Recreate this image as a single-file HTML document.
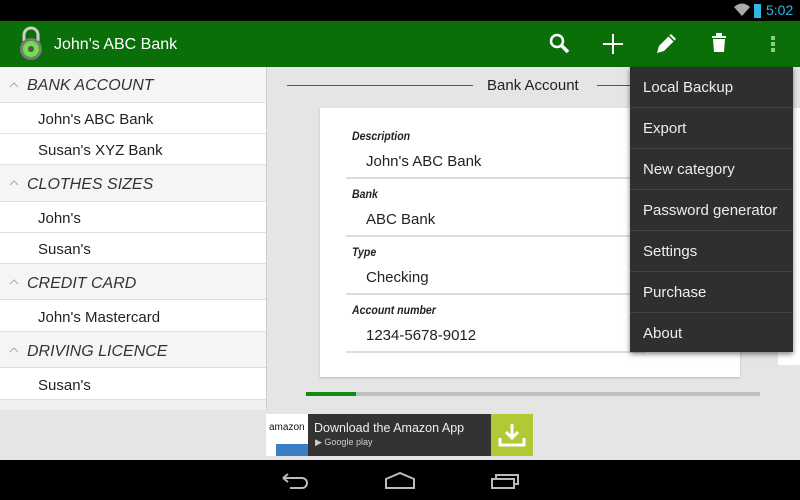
<!DOCTYPE html><html><head><style>
*{margin:0;padding:0;box-sizing:border-box}
body{width:800px;height:500px;overflow:hidden;background:#e5e5e5;font-family:"Liberation Sans",sans-serif;position:relative}
.a{position:absolute}
.hdr{position:absolute;left:0;width:266px;background:#f5f5f5;border-bottom:1px solid #ddd;font-style:italic;color:#333;font-size:16px;padding-left:27px}
.it{position:absolute;left:0;width:266px;background:#fff;border-bottom:1px solid #e0e0e0;color:#222;font-size:15px;padding-left:38px}
.car{position:absolute;left:9px;top:15px}
.lbl{position:absolute;left:352px;font-size:12px;font-weight:bold;font-style:italic;color:#222;transform:scaleX(.88);transform-origin:left}
.val{position:absolute;left:366px;font-size:15px;color:#222}
.dv{position:absolute;left:346px;width:300px;height:2px;background:#ddd}
.mi{position:absolute;left:630px;width:163px;height:41px;border-bottom:1px solid #444;color:#eee;font-size:15px;padding:12px 0 0 13px}
</style></head><body>
<div class="a" style="left:0;top:0;width:800px;height:21px;background:#000"></div>
<svg class="a" style="left:734px;top:3px" width="16" height="14"><path d="M0 4 Q8 -3 16 4 L8 13Z" fill="#aaa"/></svg>
<div class="a" style="left:754px;top:4px;width:7px;height:14px;background:#33b5e5"></div>
<div class="a" style="left:766px;top:2px;color:#33b5e5;font-size:14px">5:02</div>
<div class="a" style="left:0;top:21px;width:800px;height:46px;background:#0a6f08"></div>
<svg class="a" style="left:17px;top:26px" width="28" height="36"><path d="M7 15 V9 a7 7 0 0 1 14 0 V15" fill="none" stroke="#ccc" stroke-width="3"/><circle cx="14" cy="23" r="11" fill="#7a7a7a"/><circle cx="14" cy="23" r="8" fill="#6ee24a"/><circle cx="14" cy="23" r="3" fill="#555"/></svg>
<div class="a" style="left:54px;top:36px;color:#fff;font-size:16px">John's ABC Bank</div>
<svg class="a" style="left:549px;top:33px" width="22" height="22"><circle cx="8" cy="8" r="6" fill="none" stroke="#fff" stroke-width="2.5"/><path d="M12 12 L19 19" stroke="#fff" stroke-width="3.5"/></svg>
<svg class="a" style="left:602px;top:33px" width="22" height="22"><path d="M11 1V21M1 11H21" stroke="#fff" stroke-width="2"/></svg>
<svg class="a" style="left:655px;top:33px" width="22" height="22"><path d="M2 20 L4 13 L16 1 L21 6 L9 18Z" fill="#fff"/><path d="M14 3 L19 8" stroke="#0a6f08" stroke-width="1.5"/></svg>
<svg class="a" style="left:711px;top:33px" width="16" height="20"><rect x="1" y="3" width="14" height="2" fill="#fff"/><rect x="5" y="0" width="6" height="3" fill="#fff"/><path d="M2 6 H14 L13 19 H3Z" fill="#fff"/></svg>
<div class="a" style="left:771px;top:36px;width:4px;height:4px;background:#8c8;box-shadow:0 6px #8c8,0 12px #8c8"></div>
<div class="a" style="left:0;top:67px;width:267px;height:343px;background:#fff;border-right:1px solid #ccc"></div>
<div class="hdr" style="top:67px;height:36px;padding-top:10px"><svg class="car" width="10" height="6"><path d="M1 5L5 1L9 5" fill="none" stroke="#aaa"/></svg>BANK ACCOUNT</div>
<div class="it" style="top:103px;height:31px;padding-top:8px">John's ABC Bank</div>
<div class="it" style="top:134px;height:31px;padding-top:8px">Susan's XYZ Bank</div>
<div class="hdr" style="top:165px;height:37px;padding-top:11px"><svg class="car" width="10" height="6"><path d="M1 5L5 1L9 5" fill="none" stroke="#aaa"/></svg>CLOTHES SIZES</div>
<div class="it" style="top:202px;height:31px;padding-top:8px">John's</div>
<div class="it" style="top:233px;height:31px;padding-top:8px">Susan's</div>
<div class="hdr" style="top:264px;height:36px;padding-top:11px"><svg class="car" width="10" height="6"><path d="M1 5L5 1L9 5" fill="none" stroke="#aaa"/></svg>CREDIT CARD</div>
<div class="it" style="top:300px;height:32px;padding-top:9px">John's Mastercard</div>
<div class="hdr" style="top:332px;height:36px;padding-top:11px"><svg class="car" width="10" height="6"><path d="M1 5L5 1L9 5" fill="none" stroke="#aaa"/></svg>DRIVING LICENCE</div>
<div class="it" style="top:368px;height:32px;padding-top:9px">Susan's</div>
<div class="a" style="left:0;top:400px;width:266px;height:10px;background:#f0f0f0"></div>
<div class="a" style="left:287px;top:85px;width:186px;height:1px;background:#555"></div>
<div class="a" style="left:597px;top:85px;width:40px;height:1px;background:#555"></div>
<div class="a" style="left:487px;top:77px;font-size:15px;color:#222">Bank Account</div>
<div class="a" style="left:320px;top:108px;width:420px;height:269px;background:#fff;box-shadow:0 1px 2px #bbb"></div>
<div class="a" style="left:778px;top:108px;width:22px;height:257px;background:#fff"></div>
<div class="lbl" style="top:129px">Description</div><div class="val" style="top:153px">John's ABC Bank</div><div class="dv" style="top:177px"></div>
<div class="lbl" style="top:187px">Bank</div><div class="val" style="top:211px">ABC Bank</div><div class="dv" style="top:235px"></div>
<div class="lbl" style="top:245px">Type</div><div class="val" style="top:269px">Checking</div><div class="dv" style="top:293px"></div>
<div class="lbl" style="top:303px">Account number</div><div class="val" style="top:327px">1234-5678-9012</div><div class="dv" style="top:351px"></div>
<div class="a" style="left:306px;top:392px;width:454px;height:4px;background:#c0c0c0"></div>
<div class="a" style="left:306px;top:392px;width:50px;height:4px;background:#118c11"></div>
<div class="a" style="left:630px;top:67px;width:163px;height:285px;background:#2f2f2f;box-shadow:0 2px 5px rgba(0,0,0,.5)"></div>
<div class="mi" style="top:67px">Local Backup</div>
<div class="mi" style="top:108px">Export</div>
<div class="mi" style="top:149px">New category</div>
<div class="mi" style="top:190px">Password generator</div>
<div class="mi" style="top:231px">Settings</div>
<div class="mi" style="top:272px">Purchase</div>
<div class="mi" style="top:313px;border:0">About</div>
<div class="a" style="left:266px;top:414px;width:42px;height:42px;background:#fff"></div>
<div class="a" style="left:269px;top:422px;font-size:10px;color:#111">amazon</div>
<div class="a" style="left:276px;top:444px;width:32px;height:12px;background:#3a7fc6"></div>
<div class="a" style="left:308px;top:414px;width:183px;height:42px;background:#333"></div>
<div class="a" style="left:314px;top:421px;color:#eee;font-size:12.5px">Download the Amazon App</div>
<div class="a" style="left:315px;top:437px;color:#ccc;font-size:9px">▶ Google play</div>
<div class="a" style="left:491px;top:414px;width:42px;height:42px;background:#b0c935"></div>
<svg class="a" style="left:498px;top:421px" width="28" height="28"><path d="M14 3V17M8 11L14 17L20 11M2 17V24H26V17" fill="none" stroke="#fff" stroke-width="3"/></svg>
<div class="a" style="left:0;top:460px;width:800px;height:40px;background:#000"></div>
<svg class="a" style="left:280px;top:472px" width="30" height="18"><path d="M3 6H22a5 5 0 0 1 0 10H10M3 6L8 2M3 6L8 10" fill="none" stroke="#bbb" stroke-width="2"/></svg>
<svg class="a" style="left:384px;top:472px" width="32" height="18"><path d="M2 7L16 1L30 7V16H2Z" fill="none" stroke="#bbb" stroke-width="2"/></svg>
<svg class="a" style="left:490px;top:473px" width="32" height="16"><path d="M2 6H24V15H2Z M6 6V2H28V11H24" fill="none" stroke="#bbb" stroke-width="2"/></svg>
</body></html>
